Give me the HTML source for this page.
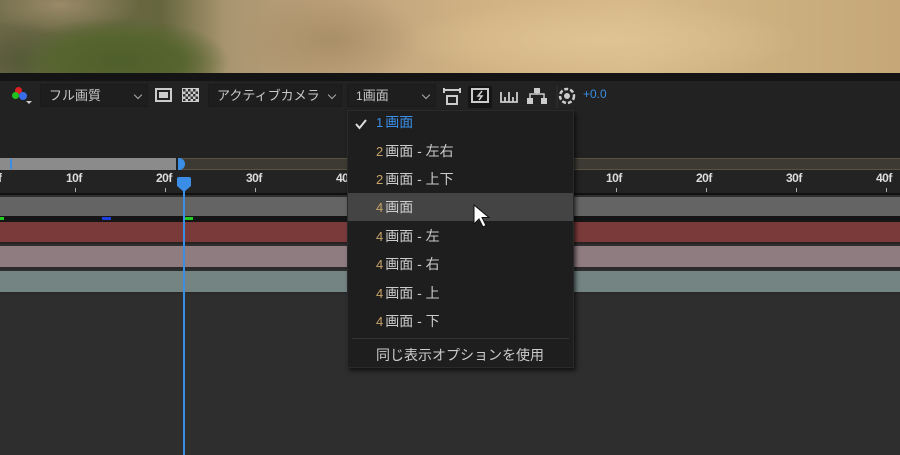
<!DOCTYPE html>
<html><head><meta charset="utf-8"><style>
*{margin:0;padding:0;box-sizing:border-box}
body{width:900px;height:455px;overflow:hidden;background:#2e2e2e;position:relative;font-family:"Liberation Sans","Noto Sans CJK JP",sans-serif;color:#c8c8c8}
.a{position:absolute}
.photo{left:0;top:0;width:900px;height:73px;background:
radial-gradient(ellipse 110px 45px at 120px 62px,#4f5f2c 0%,#56652f 55%,rgba(80,90,40,0) 100%),
radial-gradient(ellipse 60px 40px at 20px 60px,#55583a 0%,rgba(0,0,0,0) 100%),
radial-gradient(ellipse 80px 30px at 60px 5px,#9a8a68 0%,rgba(0,0,0,0) 100%),
radial-gradient(ellipse 90px 50px at 330px 40px,#a98f68 0%,rgba(0,0,0,0) 100%),
radial-gradient(ellipse 200px 40px at 600px 40px,#e0c392 0%,rgba(0,0,0,0) 100%),
linear-gradient(90deg,#6e6a48 0%,#66663e 18%,#a89570 25%,#bba07a 35%,#d2b384 55%,#d8ba8a 70%,#cdb07f 85%,#c6a878 100%)}
.dk{left:0;top:73px;width:900px;height:8px;background:#141414}
.tb{left:0;top:81px;width:900px;height:31px;background:#222}
.dd{border:1px solid #1a1a1a;background:#1e1e1e;height:23px;top:84px;font-size:13px;line-height:21px;padding-left:8px;color:#c8c8c8}
.dd .chev{position:absolute;right:6px;top:7px;width:6px;height:6px;border-right:1.5px solid #aaa;border-bottom:1.5px solid #aaa;transform:rotate(45deg)}
.panel{left:0;top:112px;width:900px;height:46px;background:#222}
.wa{top:158px;height:12px}
.ruler{left:0;top:170px;width:900px;height:25px;background:#232323;border-bottom:2px solid #111}
.lbl{top:171px;font-size:12px;color:#ddd;font-weight:bold;letter-spacing:-0.5px;font-family:"Liberation Sans Narrow","Liberation Sans",sans-serif}
.tick{top:188px;width:1px;height:4px;background:#aaa}
.bar{left:0;width:900px}
.menu{left:347px;top:110px;width:227px;height:258px;background:#1e1e1e;box-shadow:2px 3px 4px rgba(0,0,0,.6);border:1px solid #2a2a2a}
.it{position:absolute;left:28px;font-size:14px;color:#ccc;height:28px;line-height:28px;white-space:nowrap}
.it b{font-weight:normal;color:#c9a36a;font-size:13px;margin-right:2px}
</style></head><body>
<div class="a photo"></div>
<div class="a dk"></div>
<div class="a tb"></div>
<div class="a" style="left:15px;top:87px;width:7px;height:7px;border-radius:50%;background:#e02020"></div>
<div class="a" style="left:12px;top:92px;width:7px;height:7px;border-radius:50%;background:#20c020"></div>
<div class="a" style="left:19px;top:92px;width:8px;height:8px;border-radius:50%;background:#3a6ee8"></div>
<div class="a" style="left:26px;top:101px;border-left:3px solid transparent;border-right:3px solid transparent;border-top:3px solid #ccc"></div>
<div class="a dd" style="left:40px;width:108px">フル画質<span class="chev"></span></div>
<div class="a" style="left:155px;top:88px;width:17px;height:14px;border:2px solid #ccc"><div style="margin:2px;width:9px;height:6px;background:#ccc"></div></div>
<div class="a" style="left:182px;top:88px;width:17px;height:14px;border:1px solid #ccc;background:repeating-conic-gradient(#ccc 0 25%,#333 0 50%) 0 0/5px 5px"></div>
<div class="a dd" style="left:208px;width:134px">アクティブカメラ<span class="chev"></span></div>
<div class="a dd" style="left:347px;width:89px"><span style="font-size:12px">1</span>画面<span class="chev"></span></div>
<svg class="a" style="left:442px;top:86px" width="150" height="22" viewBox="0 0 150 22">
<g fill="none" stroke="#ccc" stroke-width="2">
<path d="M2 4h16M2 2v5M18 2v5M5 10h10v8H5z"/>
<rect x="26" y="-1" width="24" height="23" fill="#151515" stroke="none"/>
<rect x="30" y="3" width="16" height="13"/>
<path d="M40 5l-4 5h4l-3 4" stroke-width="1.5"/>
<path d="M59 6v10h16V6M63 11v5M67 6v10M71 11v5" stroke-width="1.8"/>
<path d="M95 4v4M88 12v-4h14v4" stroke-width="1.5"/>
</g>
<g fill="#ccc"><rect x="92" y="2" width="6" height="5"/><rect x="85" y="12" width="6" height="6"/><rect x="99" y="12" width="6" height="6"/></g>
<line x1="115" y1="0" x2="115" y2="22" stroke="#333"/>
<circle cx="125" cy="10" r="7" fill="none" stroke="#ccc" stroke-width="2.5" stroke-dasharray="4 2"/>
<circle cx="125" cy="10" r="3" fill="#ccc"/>
</svg>
<div class="a" style="left:583px;top:87px;font-size:12px;color:#3a8ee6">+0.0</div>
<div class="a panel"></div>
<div class="a wa" style="left:0;width:178px;background:#8b8b8b;border-right:2px solid #222"></div>
<div class="a wa" style="left:178px;width:722px;background:#3d3a34;border-top:1px solid #5a5244;border-bottom:1px solid #5a5244"></div>
<div class="a" style="left:10px;top:159px;width:2px;height:10px;background:#3a8ee6"></div>
<div class="a" style="left:178px;top:158px;width:7px;height:12px;background:#3a8ee6;border-radius:0 6px 6px 0"></div>
<div class="a ruler"></div>
<div class="a lbl" style="left:-2px">f</div>
<div class="a lbl" style="left:66px">10f</div><div class="a tick" style="left:75px"></div>
<div class="a lbl" style="left:156px">20f</div><div class="a tick" style="left:165px"></div>
<div class="a lbl" style="left:246px">30f</div><div class="a tick" style="left:255px"></div>
<div class="a lbl" style="left:336px">40f</div>
<div class="a lbl" style="left:606px">10f</div><div class="a tick" style="left:616px"></div>
<div class="a lbl" style="left:696px">20f</div><div class="a tick" style="left:706px"></div>
<div class="a lbl" style="left:786px">30f</div><div class="a tick" style="left:796px"></div>
<div class="a lbl" style="left:876px">40f</div><div class="a tick" style="left:886px"></div>
<div class="a bar" style="top:197px;height:19px;background:#646464"></div>
<div class="a bar" style="top:216px;height:6px;background:#151515"></div>
<div class="a" style="left:0;top:217px;width:4px;height:3px;background:#2c2"></div>
<div class="a" style="left:102px;top:217px;width:9px;height:3px;background:#1a3ee0"></div>
<div class="a" style="left:185px;top:217px;width:8px;height:3px;background:#2c2"></div>
<div class="a bar" style="top:222px;height:22px;background:#7a3a3a;border-bottom:2px solid #2a2222"></div>
<div class="a bar" style="top:246px;height:23px;background:#8f7c81;border-bottom:2px solid #2a2a2a"></div>
<div class="a bar" style="top:271px;height:23px;background:#738483;border-bottom:2px solid #2a2a2a"></div>
<div class="a" style="left:183px;top:190px;width:2px;height:265px;background:#3a8ee6"></div>
<div class="a" style="left:177px;top:177px;width:14px;height:9px;background:#3a8ee6;border-radius:2px 2px 0 0"></div>
<div class="a" style="left:177px;top:186px;border-left:7px solid transparent;border-right:7px solid transparent;border-top:6px solid #3a8ee6"></div>
<div class="a menu">
<div class="a" style="left:0;top:82px;width:225px;height:28px;background:#444"></div>
<svg class="a" style="left:6px;top:6px" width="14" height="14"><path d="M2 7l3.5 4L12 3" fill="none" stroke="#ddd" stroke-width="2"/></svg>
<div class="it" style="top:-3px;color:#3a8ee6"><b style="color:#3a8ee6">1</b>画面</div>
<div class="it" style="top:26px"><b>2</b>画面 - 左右</div>
<div class="it" style="top:54px"><b>2</b>画面 - 上下</div>
<div class="it" style="top:82px"><b>4</b>画面</div>
<div class="it" style="top:111px"><b>4</b>画面 - 左</div>
<div class="it" style="top:139px"><b>4</b>画面 - 右</div>
<div class="it" style="top:168px"><b>4</b>画面 - 上</div>
<div class="it" style="top:196px"><b>4</b>画面 - 下</div>
<div class="a" style="left:4px;top:227px;width:217px;height:1px;background:#333"></div>
<div class="it" style="top:230px">同じ表示オプションを使用</div>
</div>
<svg class="a" style="left:473px;top:204px" width="18" height="26"><path d="M1 1v19l5-5 4 8 3-1.5-4-8h7z" fill="#fff" stroke="#111" stroke-width="1"/></svg>
</body></html>
